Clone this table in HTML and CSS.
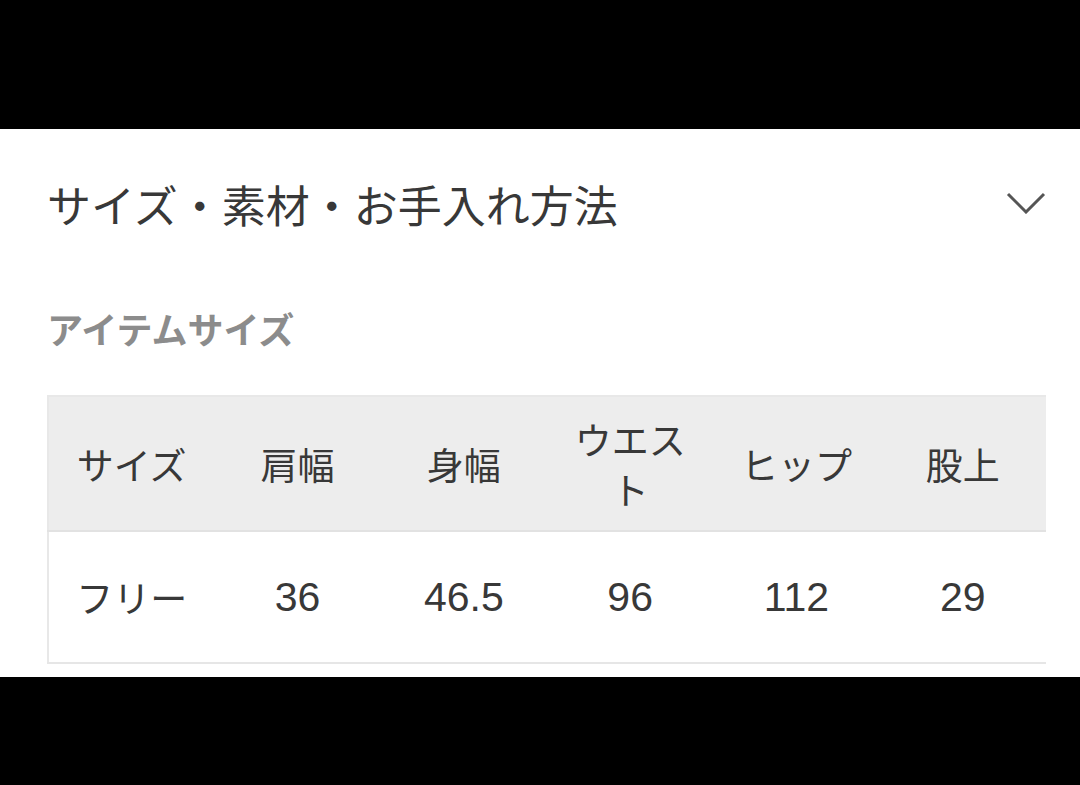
FILE: index.html
```html
<!DOCTYPE html>
<html lang="ja">
<head>
<meta charset="utf-8">
<link rel="stylesheet" href="styles.css">
</head>
<body>
<div class="bar-top"></div>
<main class="panel">
  <div class="head">
    <h1 class="title">サイズ・素材・お手入れ方法</h1>
    <svg class="chev" width="40" height="22" viewBox="0 0 40 22"><path d="M2 2 L20 20 L38 2" fill="none" stroke="#555" stroke-width="3"/></svg>
  </div>
  <h2 class="sub">アイテムサイズ</h2>
  <table class="size">
    <thead>
      <tr><th>サイズ</th><th>肩幅</th><th>身幅</th><th>ウエスト</th><th>ヒップ</th><th>股上</th></tr>
    </thead>
    <tbody>
      <tr><td>フリー</td><td class="num">36</td><td class="num">46.5</td><td class="num">96</td><td class="num">112</td><td class="num">29</td></tr>
    </tbody>
  </table>
</main>
<div class="bar-bottom"></div>
</body>
</html>
```
FILE: styles.css
```css
html, body { margin: 0; padding: 0; background: #000; }
body { width: 1080px; height: 785px; overflow: hidden; font-family: "Noto Sans CJK JP", sans-serif; }
.bar-top { height: 129px; }
.panel { background: #fff; height: 548px; box-sizing: border-box; padding: 45px 34px 0 47px; }
.head { display: flex; justify-content: space-between; align-items: center; height: 60px; }
.title { margin: 0; font-size: 44px; font-weight: 400; color: #383838; line-height: 60px; letter-spacing: 0; }
.chev { display: block; margin-top: -2px; }
.sub { margin: 69px 0 0; font-size: 36px; font-weight: 700; color: #8c8c8c; line-height: 50px; }
.size { margin-top: 42px; width: 999px; table-layout: fixed; border-collapse: collapse; border-top: 2px solid #e8e8e8; border-left: 2px solid #e8e8e8; }
.size th, .size td { text-align: center; vertical-align: middle; color: #383838; font-size: 37px; font-weight: 400; line-height: 50px; padding: 0 12px; }
.size th { background: #ededed; height: 133px; border-bottom: 2px solid #e2e2e2; }
.size td { height: 130px; border-bottom: 2px solid #e6e6e6; }
.size td.num { font-family: "Liberation Sans", "Noto Sans CJK JP", sans-serif; font-size: 41px; }
```
